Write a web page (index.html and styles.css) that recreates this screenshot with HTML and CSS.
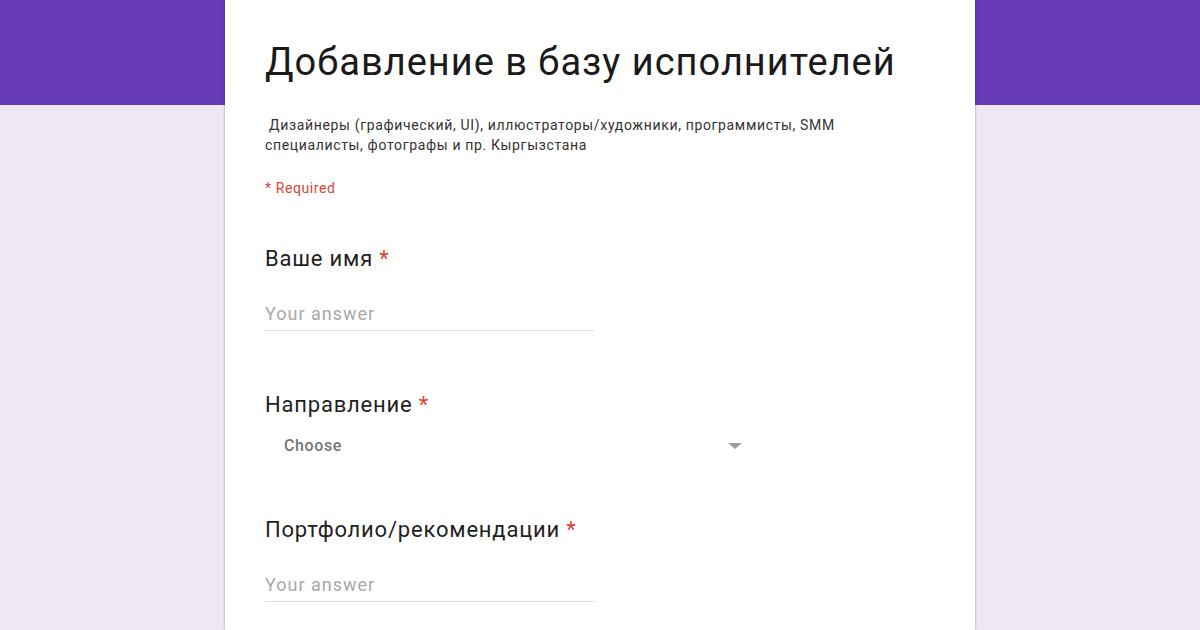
FILE: index.html
```html
<!DOCTYPE html>
<html lang="ru">
<head>
  <meta charset="UTF-8">
  <meta name="viewport" content="width=device-width, initial-scale=1.0">
  <title>Добавление в базу исполнителей</title>
  <link rel="stylesheet" href="styles.css">
</head>
<body>
  <div class="form-card">
    <h1 class="form-title">Добавление в базу исполнителей</h1>
    <p class="form-desc">&nbsp;Дизайнеры (графический, UI), иллюстраторы/художники, программисты, SMM специалисты, фотографы и пр. Кыргызстана</p>
    <div class="required-note">* Required</div>

    <!-- Вопрос 1 -->
    <div class="question">
      <div class="q-title">Ваше имя <span class="star">*</span></div>
      <div class="answer">Your answer</div>
    </div>

    <!-- Вопрос 2 -->
    <div class="question question-select">
      <div class="q-title">Направление <span class="star">*</span></div>
      <div class="select">
        <span>Choose</span>
        <span class="arrow"></span>
      </div>
    </div>

    <!-- Вопрос 3 -->
    <div class="question question-last">
      <div class="q-title">Портфолио/рекомендации <span class="star">*</span></div>
      <div class="answer">Your answer</div>
    </div>
  </div>
</body>
</html>
```

FILE: styles.css
```css
body {
  margin: 0;
  font-family: Roboto, Arial, sans-serif;
  background: linear-gradient(#673ab7 0, #673ab7 105px, #ede7f6 105px);
  min-height: 630px;
}
.form-card {
  width: 750px;
  min-height: 630px;
  margin: 0 auto;
  background: #fff;
  box-shadow: 0 0 2px rgba(0, 0, 0, 0.2), 0 2px 4px rgba(0, 0, 0, 0.14);
  padding: 38px 40px 0;
  box-sizing: border-box;
}
.form-title {
  font-size: 38px;
  font-weight: 400;
  line-height: 48px;
  letter-spacing: 1px;
  margin: 0;
  color: #1a1a1a;
}
.form-desc {
  font-size: 14px;
  line-height: 20px;
  letter-spacing: 0.65px;
  color: #333;
  margin: 29px 0 0;
  width: 610px;
}
.required-note {
  font-size: 14px;
  line-height: 20px;
  letter-spacing: 0.6px;
  color: #db4437;
  margin-top: 23px;
}
.question {
  margin-top: 47px;
}
.q-title {
  font-size: 22px;
  line-height: 28px;
  letter-spacing: 0.8px;
  color: #1f1f1f;
}
.star {
  color: #db4437;
}
.answer {
  width: 330px;
  font-size: 18px;
  line-height: 21px;
  letter-spacing: 1px;
  color: #a8a8a8;
  padding: 30px 0 6px;
  border-bottom: 1px solid #e0e0e0;
}
.question-select {
  margin-top: 60px;
}
.select {
  width: 477px;
  box-sizing: border-box;
  display: flex;
  align-items: center;
  justify-content: space-between;
  padding: 17px 0 0 19px;
  font-size: 16px;
  line-height: 19px;
  letter-spacing: 0.6px;
  font-weight: 500;
  color: #757575;
}
.arrow {
  border-left: 7px solid transparent;
  border-right: 7px solid transparent;
  border-top: 6px solid #9e9e9e;
}
.question-last {
  margin-top: 61px;
}
```
